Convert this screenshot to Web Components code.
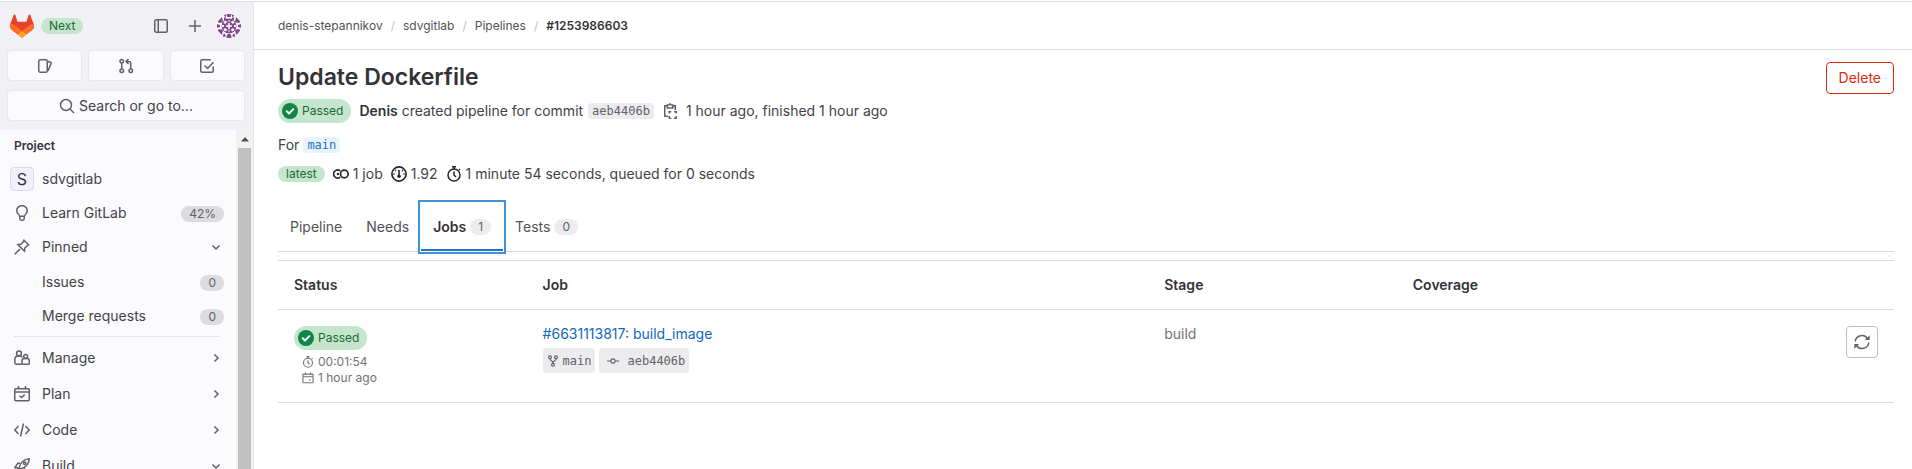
<!DOCTYPE html>
<html lang="en">
<head>
<meta charset="utf-8">
<title>Update Dockerfile · Pipelines</title>
<style>
  body { margin: 0; background: #fff; color: #434248; font: 14px/20px Inter, "Noto Sans", sans-serif; }
</style>
</head>
<body>
<app-shell>
  <side-bar slot="sidebar"></side-bar>
  <crumb-bar slot="topbar"></crumb-bar>
  <pipeline-header></pipeline-header>
  <pipeline-tabs></pipeline-tabs>
  <jobs-table></jobs-table>
</app-shell>

<script>
const S = (body) => `<svg viewBox="0 0 16 16" fill="none" stroke="currentColor" stroke-width="1.5" aria-hidden="true">${body}</svg>`;
const ICONS = {
  sidebar: S('<rect x="1.75" y="1.75" width="12.5" height="12.5" rx="1.5"/><path d="M5.25 2v12"/>'),
  plus: S('<path d="M8 2v12M2 8h12"/>'),
  issues: S('<rect x="1.75" y="1.75" width="8.5" height="12.5" rx="1.5"/><path d="M10.5 3.2l3 1.1a1 1 0 0 1 .6 1.3L10.9 13"/>'),
  merge: S('<circle cx="3.75" cy="3.25" r="1.75"/><circle cx="3.75" cy="12.75" r="1.75"/><circle cx="12.75" cy="12.75" r="1.75"/><path d="M3.75 5v6M12.75 11V5.5a2 2 0 0 0-2-2H8.5M10.5 1L8 3.5 10.5 6"/>'),
  todo: S('<path d="M14.25 8.5v4.25a1.5 1.5 0 0 1-1.5 1.5h-9.5a1.5 1.5 0 0 1-1.5-1.5v-9.5a1.5 1.5 0 0 1 1.5-1.5h8.5"/><path d="M5.5 7.5L8.5 10.5 14.5 4.2"/>'),
  search: S('<circle cx="7" cy="7" r="5.5"/><path d="M11 11l4 4"/>'),
  bulb: S('<path d="M5.6 11.2C5.4 9.6 2.75 8.6 2.75 5.7a5.25 5 0 0 1 10.5 0c0 2.9-2.65 3.9-2.85 5.5z"/><path d="M5.8 11v2.6c0 .9.6 1.6 1.5 1.6h1.4c.9 0 1.5-.7 1.5-1.6V11"/>'),
  pin: S('<path d="M10 1.2l4.8 4.8-1.6.6-2.4 2.4-.3 3.2-6.7-6.7L7 5.2l2.4-2.4zM5.9 10.1L.7 15.3"/>'),
  down: S('<path d="M4.5 6.500l3.500 3.500 3.500-3.500"/>'),
  right: S('<path d="M6.500 4.500l3.500 3.500-3.500 3.500"/>'),
  users: S('<circle cx="5" cy="3.400" r="2.400"/><path d="M7.700 14.250H2.200A1.300 1.300 0 0 1 .900 13V9a3 3 0 0 1 3-3h2.200c1 0 1.800.5 2.200 1.300"/><circle cx="11.700" cy="6.500" r="1.900"/><path d="M8 10.800a2.300 2.300 0 0 1 2.300-2.300h2.800a2.200 2.200 0 0 1 2.200 2.200v2.500a1 1 0 0 1-1 1H9a1 1 0 0 1-1-1z"/>'),
  plan: S('<rect x=".75" y="2.750" width="14.500" height="12" rx="1"/><path d="M1 6h14M4.500 0v3M11.500 0v3M5.500 9.800l2 1.800 3.200-3"/>'),
  code: S('<path d="M4.500 4L.800 8l3.700 4M11.500 4l3.700 4-3.700 4M9.500 1.500l-3 13"/>'),
  rocket: S('<path d="M5 10.500C6 5.500 9.500 1 15.200.800 15.200 6.500 10.500 10 5.500 11.200zM6 5.300H3.800L.900 9.500l3.500.500M10.700 10v2.300l-4.200 2.900-.500-3.500M3 11.500C1 12 .800 13.500.800 15.200"/><circle cx="10.700" cy="5.300" r="1.200"/>'),
  check: '<svg viewBox="0 0 16 16" aria-hidden="true"><circle cx="8" cy="8" r="8" fill="#108548"/><path d="M4.700 8.300l2.300 2.200 4.300-4.400" fill="none" stroke="#fff" stroke-width="2" stroke-linecap="round" stroke-linejoin="round"/></svg>',
  copy: S('<path d="M5 2.750H2.750v10.500H6M11 2.750h2.250V7M5.250 5V2h1.500L8 .900 9.250 2h1.500v3z"/><path d="M7.250 10.500V8.750h2M12 8.750h2.250v1.750M14.250 13v2.250H12M9.250 15.250h-2V13"/>'),
  pipeline: '<svg viewBox="0 0 16 16" fill="none" stroke="currentColor" stroke-width="1.700" aria-hidden="true"><circle cx="11.300" cy="8" r="3.800"/><path d="M7.200 4.900A4 4 0 1 0 7.200 11.100"/><circle cx="4.900" cy="8" r="1.200" fill="currentColor" stroke="none"/></svg>',
  gauge: '<svg viewBox="0 0 16 16" fill="none" stroke="currentColor" stroke-width="1.700" aria-hidden="true"><circle cx="8" cy="8" r="7.100"/><path d="M3.800 8H2M12.200 8H14M5 5l-1-1M11 5l1-1" stroke-width="1.200"/><path d="M8 4v6" stroke-width="1.600"/><circle cx="8" cy="10.300" r="1.800" fill="currentColor" stroke="none"/></svg>',
  timer: S('<circle cx="8" cy="9" r="6"/><path d="M8 5.500V9l2 2M6 .800h4M8 1v2M13 3l1 1"/>'),
  calendar: S('<rect x="1.250" y="2.750" width="13.500" height="11.500" rx="1"/><path d="M1.500 6.250h13M4.500 .800v2.500M11.500 .800v2.500M9.500 10.500h2"/>'),
  fork: S('<circle cx="4" cy="3" r="1.900"/><circle cx="12" cy="3" r="1.900"/><circle cx="8" cy="13" r="1.900"/><path d="M4 5c0 3 4 2.200 4 6 0-3.800 4-3 4-6"/>'),
  commit: S('<circle cx="8" cy="8" r="2.800"/><path d="M0 8h5M11 8h5"/>'),
  retry: S('<path d="M1.200 7.500A6.800 6.800 0 0 1 13.600 4.500M14.800 8.500A6.800 6.800 0 0 1 2.400 11.500"/><path d="M15.700 1.200V6H10.900zM.300 14.800V10H5.100z" fill="currentColor" stroke="none"/>'),
  up: '<svg viewBox="0 0 16 16" aria-hidden="true"><path d="M8 6l4 4.500H4z" fill="#505050"/></svg>',
  logo: '<svg viewBox="0 0 25 24" aria-hidden="true"><path d="m24.507 9.500-.034-.090L21.082.562a.896.896 0 0 0-1.694.091l-2.290 7.010H7.825L5.535.653a.898.898 0 0 0-1.694-.090L.451 9.411.416 9.500a6.297 6.297 0 0 0 2.090 7.278l.012.010.030.022 5.160 3.867 2.560 1.935 1.554 1.176a1.051 1.051 0 0 0 1.268 0l1.555-1.176 2.560-1.935 5.197-3.890.014-.010A6.297 6.297 0 0 0 24.507 9.500Z" fill="#E24329"/><path d="m24.507 9.500-.034-.090a11.440 11.440 0 0 0-4.560 2.051l-7.447 5.632 4.742 3.584 5.197-3.890.014-.010A6.297 6.297 0 0 0 24.507 9.500Z" fill="#FC6D26"/><path d="m7.707 20.677 2.560 1.935 1.555 1.176a1.051 1.051 0 0 0 1.268 0l1.555-1.176 2.560-1.935-4.743-3.584-4.755 3.584Z" fill="#FCA326"/><path d="M5.010 11.461a11.430 11.430 0 0 0-4.560-2.050L.416 9.500a6.297 6.297 0 0 0 2.090 7.278l.012.010.030.022 5.160 3.867 4.745-3.584-7.444-5.632Z" fill="#FC6D26"/></svg>',
  avatar: `<svg viewBox="0 0 24 24" aria-hidden="true"><defs><clipPath id="c"><circle cx="12" cy="12" r="12"/></clipPath></defs><g clip-path="url(#c)"><path fill="#fff" d="M0 0h24v24H0z"/><g fill="#7e4a8c"><path d="M6 0l3 0 0 4zM18 0l-3 0 0 4zM9 0h6l-1.500 3h-3zM0 8l5-5 1 5-3 1zM24 8l-5-5-1 5 3 1zM0 16l5 5 1-5-3-1zM24 16l-5 5-1-5 3-1zM9 24h6l-1.500-4h-3zM5 24l2-5 2 3zM19 24l-2-5-2 3zM0 10l3 1v2l-3 1zM24 10l-3 1v2l3 1z"/><circle cx="12" cy="12" r="7.500"/><path d="M7 3l3 2-3 2zM17 3l-3 2 3 2z"/></g><path fill="#fff" d="M8 6.500l2.500 1.500-2.500 2-1.500-1.500zM16 6.500L13.500 8l2.500 2 1.500-1.500zM8 17.500L6.500 15.500 8 14l2.500 2zM16 17.500l1.500-2L16 14l-2.500 2zM12 5.500l1 2h-2zM12 18.500l1-2h-2zM11.200 9h1.600v6h-1.600zM9 11.200h6v1.600H9zM5 11h2v2H5zM17 11h2v2h-2z"/></g></svg>`
};

const define = (name, css, html) => {
  const t = document.createElement('template');
  t.innerHTML = `<style>*{box-sizing:border-box}${css}</style>${html}`;
  customElements.define(name, class extends HTMLElement {
    constructor() {
      super();
      this.attachShadow({ mode: 'open' }).append(t.content.cloneNode(true));
    }
  });
};

customElements.define('gl-icon', class extends HTMLElement {
  connectedCallback() {
    if (this.shadowRoot) return;
    this.attachShadow({ mode: 'open' }).innerHTML =
      `<style>:host{display:block;flex:none;width:var(--size,16px);height:var(--size,16px)}svg{display:block;width:100%;height:100%}</style>${ICONS[this.getAttribute('name')]}`;
  }
});

define('gl-badge', `
  :host { display: inline-block; flex: none; padding: 0 8px; border-radius: 8px; font-size: 12px; line-height: 16px;
          background: var(--badge-bg, #dcdcde); color: var(--badge-fg, #626168); }
  :host([variant=success]) { --badge-bg: #c3e6cd; --badge-fg: #24663b; }
  :host([variant=muted]) { --badge-bg: #ececef; }
`, '<slot></slot>');

define('ci-status', `
  :host { display: inline-flex; flex: none; align-items: center; gap: 4px; height: 24px; padding: 0 8px 0 4px;
          border-radius: 12px; background: #c3e6cd; color: #24663b; font-size: 12px; line-height: 16px; box-sizing: border-box; }
`, '<gl-icon name="check"></gl-icon><slot></slot>');

define('code-chip', `
  :host { display: inline-flex; flex: none; align-items: center; height: 16px; padding: 0 4px; border-radius: 4px; background: #ececef;
          color: #626168; font: 12px/16px "DejaVu Sans Mono", monospace; box-sizing: border-box; }
  :host([variant=info]) { background: #e9f3fc; color: #1f75cb; }
  :host([size=large]) { height: 25px; gap: 4px; }
  a { color: inherit; text-decoration: none; }
`, '<slot name="icon"></slot><a href="#"><slot></slot></a>');

define('app-shell', `
  :host { display: grid; grid-template-columns: 254px minmax(0, 1fr); height: 100vh; overflow: hidden; padding-top: 1px; box-sizing: border-box; }
  aside, .content { border-top: 1px solid #dcdcde; min-height: 0; overflow: hidden; }
  main { padding: 12px 18px 0 24px; }
`, `<aside><slot name="sidebar"></slot></aside>
  <div class="content"><slot name="topbar"></slot><main><slot></slot></main></div>`);

define('crumb-bar', `
  :host { display: block; border-bottom: 1px solid #dcdcde; padding: 0 24px; }
  ol { display: flex; align-items: center; height: 47px; margin: 0; padding: 1px 0 0; list-style: none; font-size: 12px; line-height: 16px; }
  li + li::before { content: "/"; color: #bfbfc3; padding: 0 8px; }
  a { color: #535158; text-decoration: none; }
  li:last-child a { color: #333238; font-weight: 600; }
`, `<nav aria-label="Breadcrumb"><ol><li><a href="#">denis-stepannikov</a></li><li><a href="#">sdvgitlab</a></li><li><a href="#">Pipelines</a></li><li><a href="#" aria-current="page">#1253986603</a></li></ol></nav>`);

define('nav-item', `
  :host { display: block; margin: 0 12px 0 10px; }
  a { display: grid; grid-template-columns: 24px minmax(0, 1fr) auto; column-gap: 8px; align-items: center; height: 34px;
      color: #434248; text-decoration: none; }
  :host([section]) a { height: 36px; }
  .lead { display: grid; justify-items: center; color: #626168; }
  .end { color: #626168; }
`, `<a href="#"><span class="lead"><slot name="icon"></slot></span><span><slot></slot></span><span class="end"><slot name="end"></slot></span></a>`);

define('side-bar', `
  :host { display: flex; flex-direction: column; height: 100%; background: #f1f0f4; border-right: 1px solid #e6e6ea; box-sizing: border-box; }
  header { display: flex; align-items: center; height: 48px; padding: 0 12px 0 10px; }
  header gl-badge { margin-left: 7px; margin-right: auto; }
  button { display: flex; align-items: center; justify-content: center; border: 0; background: none; padding: 0; margin: 0; color: #626168; font: inherit; cursor: pointer; }
  .big { --size: 24px; }
  .tool { width: 32px; height: 32px; margin-left: 2px; }
  .user { margin-left: 6px; }
  .tools { display: grid; grid-template-columns: repeat(3, 1fr); gap: 6px; padding: 0 8px 9px 7px; }
  .card { height: 31px; border: 1px solid #e8e7ec; border-radius: 4px; background: #fbfafd; }
  .search { margin: 0 8px 0 7px; gap: 4px; color: #434248; }
  .search gl-icon { color: #626168; }
  .body { display: flex; flex: 1; min-height: 0; margin-top: 9px; overflow: hidden; background: #fbfafd; }
  nav { flex: 1; min-width: 0; }
  h2 { margin: 0; padding: 8px 14px; font-size: 12px; line-height: 16px; font-weight: 600; color: #333238; }
  .sub { padding-top: 1px; }
  .proj { display: block; width: 24px; height: 24px; border: 1px solid #dcdaf0; border-radius: 4px; background: #f1f0ff; color: #333238; text-align: center; line-height: 22px; font-size: 16px; }
  hr { margin: 3px 16px 3px 14px; border: 0; border-top: 1px solid #e4e4e8; }
  .bar { display: flex; flex-direction: column; align-items: center; width: 17px; background: #f1f1f1; }
  .bar gl-icon { margin: 1px 0; }
  .bar i { flex: 1; width: 13px; background: #c1c1c1; }
`, `<header>
    <gl-icon class="big" name="logo"></gl-icon><gl-badge variant="success">Next</gl-badge>
    <button class="tool" aria-label="Hide sidebar"><gl-icon name="sidebar"></gl-icon></button>
    <button class="tool" aria-label="Create new"><gl-icon name="plus"></gl-icon></button>
    <button class="user" aria-label="User menu"><gl-icon class="big" name="avatar"></gl-icon></button>
  </header>
  <div class="tools">
    <button class="card" aria-label="Issues"><gl-icon name="issues"></gl-icon></button>
    <button class="card" aria-label="Merge requests"><gl-icon name="merge"></gl-icon></button>
    <button class="card" aria-label="To-do list"><gl-icon name="todo"></gl-icon></button>
  </div>
  <button class="card search"><gl-icon name="search"></gl-icon>Search or go to...</button>
  <div class="body">
    <nav aria-label="Project">
      <h2>Project</h2>
      <nav-item><span class="proj" slot="icon">S</span>sdvgitlab</nav-item>
      <nav-item><gl-icon slot="icon" name="bulb"></gl-icon>Learn GitLab<gl-badge slot="end">42%</gl-badge></nav-item>
      <nav-item><gl-icon slot="icon" name="pin"></gl-icon>Pinned<gl-icon slot="end" name="down"></gl-icon></nav-item>
      <div class="sub">
        <nav-item>Issues<gl-badge slot="end">0</gl-badge></nav-item>
        <nav-item>Merge requests<gl-badge slot="end">0</gl-badge></nav-item>
      </div>
      <hr>
      <nav-item section><gl-icon slot="icon" name="users"></gl-icon>Manage<gl-icon slot="end" name="right"></gl-icon></nav-item>
      <nav-item section><gl-icon slot="icon" name="plan"></gl-icon>Plan<gl-icon slot="end" name="right"></gl-icon></nav-item>
      <nav-item section><gl-icon slot="icon" name="code"></gl-icon>Code<gl-icon slot="end" name="right"></gl-icon></nav-item>
      <nav-item section><gl-icon slot="icon" name="rocket"></gl-icon>Build<gl-icon slot="end" name="down"></gl-icon></nav-item>
    </nav>
    <div class="bar"><gl-icon name="up"></gl-icon><i></i></div>
  </div>`);

define('pipeline-header', `
  :host { display: flex; justify-content: space-between; align-items: flex-start; }
  h1 { margin: 0 0 7px; font-size: 23px; line-height: 30px; font-weight: 600; color: #333238; }
  .row { display: flex; align-items: center; min-height: 20px; }
  .status { gap: 8px; margin-bottom: 12px; }
  strong { font-weight: 600; color: #333238; }
  .ref { gap: 4px; margin-bottom: 9px; }
  .stats { gap: 8px; }
  .stat { display: flex; align-items: center; gap: 4px; }
  .stat gl-icon { color: #28272d; }
  .copy { border: 0; background: none; padding: 0; color: #626168; }
  .delete { height: 32px; padding: 0 12px; border: 1px solid #dd2b0e; border-radius: 4px; background: #fff; color: #dd2b0e; font: inherit; }
  .commit { display: flex; align-items: center; gap: 5px; }
`, `<div>
    <h1>Update Dockerfile</h1>
    <div class="row status"><ci-status>Passed</ci-status>
      <div class="commit"><span><strong>Denis</strong> created pipeline for commit</span><code-chip>aeb4406b</code-chip></div>
      <button class="copy" aria-label="Copy commit SHA"><gl-icon name="copy"></gl-icon></button>
      <span>1 hour ago, finished 1 hour ago</span></div>
    <div class="row ref">For <code-chip variant="info">main</code-chip></div>
    <div class="row stats"><gl-badge variant="success">latest</gl-badge>
      <span class="stat"><gl-icon name="pipeline"></gl-icon>1 job</span>
      <span class="stat"><gl-icon name="gauge"></gl-icon>1.92</span>
      <span class="stat"><gl-icon name="timer"></gl-icon>1 minute 54 seconds, queued for 0 seconds</span></div>
  </div>
  <button class="delete">Delete</button>`);

define('pipeline-tabs', `
  :host { display: block; margin-top: 19px; border-bottom: 1px solid #dcdcde; }
  div { display: flex; }
  button { display: flex; align-items: center; gap: 4px; height: 48px; padding: 0 12px; border: 0; background: none; color: #535158; font: inherit; }
  [aria-selected=true] { color: #333238; font-weight: 600; box-shadow: inset 0 -2px #1f75cb, 0 0 0 1px #fff; outline: 2px solid #428fdc; outline-offset: 1px; }
  gl-badge { font-weight: 400; }
`, `<div role="tablist"><button role="tab">Pipeline</button><button role="tab">Needs</button><button role="tab" aria-selected="true">Jobs <gl-badge variant="muted">1</gl-badge></button><button role="tab">Tests <gl-badge variant="muted">0</gl-badge></button></div>`);

define('jobs-table', `
  :host { display: block; margin-top: 8px; }
  table { width: 100%; table-layout: fixed; border-collapse: separate; border-spacing: 0; border-top: 1px solid #dcdcde; }
  th, td { padding: 16px; text-align: left; vertical-align: top; line-height: 16px; border-bottom: 1px solid #dcdcde; }
  th { color: #333238; font-weight: 600; }
  td { color: #737278; }
  .c2 { width: 15.38%; } .c5 { width: 38.46%; }
  .job { color: #1068bf; text-decoration: none; }
  .chips { display: flex; gap: 4px; margin-top: 6px; }
  .meta { display: flex; align-items: center; gap: 4px; margin-left: 8px; font-size: 12px; --size: 12px; }
  .status { display: flex; margin-bottom: 4px; }
  .chips gl-icon { --size: 12px; }
  .chips .wide { margin: 0 4px; }
  .retry { display: grid; place-items: center; width: 32px; height: 32px; margin-left: auto; padding: 0; border: 1px solid #bfbfc3; border-radius: 4px; background: #fff; color: #626168; }
`, `<table>
    <colgroup><col class="c2"><col class="c5"><col class="c2"><col class="c2"><col class="c2"></colgroup>
    <thead><tr><th>Status</th><th>Job</th><th>Stage</th><th>Coverage</th><th></th></tr></thead>
    <tbody><tr>
      <td><div class="status"><ci-status>Passed</ci-status></div>
        <div class="meta"><gl-icon name="timer"></gl-icon>00:01:54</div>
        <div class="meta"><gl-icon name="calendar"></gl-icon>1 hour ago</div></td>
      <td><a class="job" href="#">#6631113817: build_image</a>
        <div class="chips"><code-chip size="large"><gl-icon slot="icon" name="fork"></gl-icon>main</code-chip><code-chip size="large"><gl-icon class="wide" slot="icon" name="commit"></gl-icon>aeb4406b</code-chip></div></td>
      <td>build</td><td></td>
      <td><button class="retry" aria-label="Retry"><gl-icon name="retry"></gl-icon></button></td>
    </tr></tbody>
  </table>`);
</script>
</body>
</html>
